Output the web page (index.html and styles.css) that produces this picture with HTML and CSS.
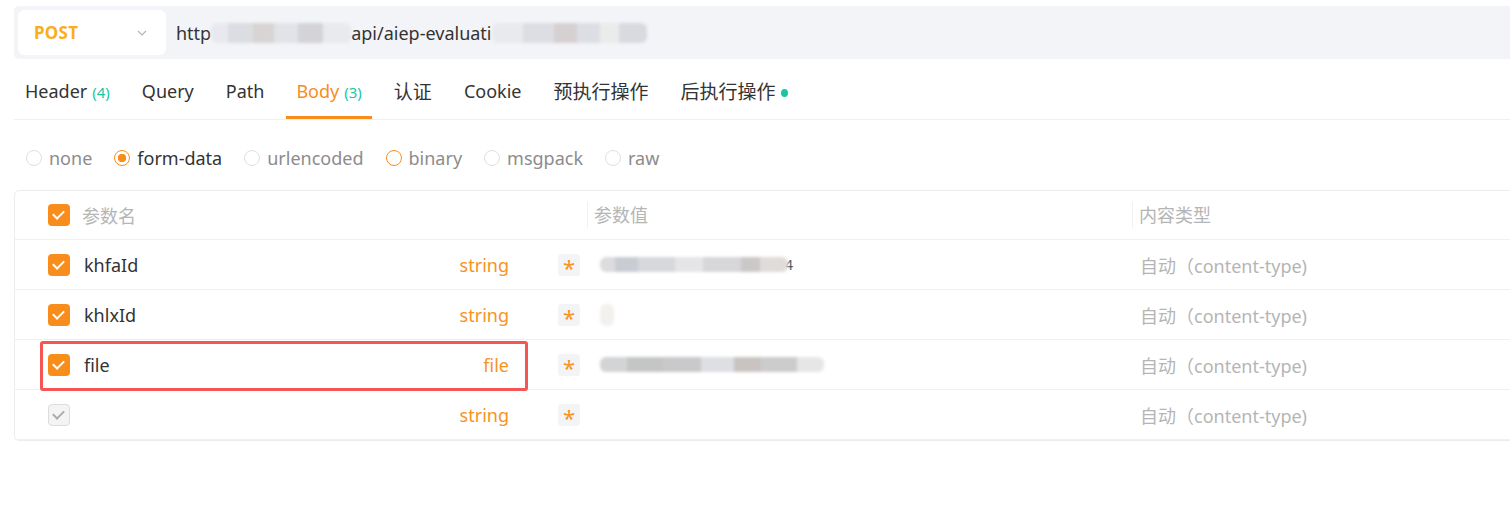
FILE: index.html
```html
<!DOCTYPE html>
<html lang="zh-CN">
<head>
    <meta charset="UTF-8">
    <meta name="viewport" content="width=device-width, initial-scale=1.0">
    <title>Body 参数</title>
    <link rel="stylesheet" href="styles.css">
</head>
<body>
<div class="page">

    <div class="url-bar">
        <div class="method">
            <span class="method-name">POST</span>
            <svg class="chevron" width="10" height="6" viewBox="0 0 10 6"><path d="M1 1l4 4 4-4" fill="none" stroke="#b4b4b4" stroke-width="1.2"/></svg>
        </div>
        <div class="url">http<span class="blur blur-url1"></span>api/aiep-evaluati<span class="blur blur-url2"></span></div>
    </div>

    <div class="tabs">
        <div class="tab">Header<span class="num">(4)</span></div>
        <div class="tab">Query</div>
        <div class="tab">Path</div>
        <div class="tab active">Body<span class="num">(3)</span></div>
        <div class="tab zh">认证</div>
        <div class="tab">Cookie</div>
        <div class="tab zh">预执行操作</div>
        <div class="tab zh">后执行操作<span class="dot"></span></div>
    </div>

    <div class="body-types">
        <label class="radio"><span class="circle"></span>none</label>
        <label class="radio checked"><span class="circle"></span>form-data</label>
        <label class="radio"><span class="circle"></span>urlencoded</label>
        <label class="radio hover"><span class="circle"></span>binary</label>
        <label class="radio"><span class="circle"></span>msgpack</label>
        <label class="radio"><span class="circle"></span>raw</label>
    </div>

    <div class="params">
        <div class="row head">
            <div class="cell name-cell">
                <span class="check on"></span>
                <span class="head-text">参数名</span>
            </div>
            <div class="cell value-cell"><span class="head-text">参数值</span></div>
            <div class="cell type-cell"><span class="head-text">内容类型</span></div>
        </div>
        <div class="row">
            <div class="cell name-cell">
                <span class="check on"></span>
                <span class="param-name">khfaId</span>
                <span class="param-type">string</span>
                <span class="required">*</span>
            </div>
            <div class="cell value-cell"><span class="blur blur-v1"></span><span class="caret">4</span></div>
            <div class="cell type-cell"><span class="auto">自动（content-type)</span></div>
        </div>
        <div class="row">
            <div class="cell name-cell">
                <span class="check on"></span>
                <span class="param-name">khlxId</span>
                <span class="param-type">string</span>
                <span class="required">*</span>
            </div>
            <div class="cell value-cell"><span class="blur blur-v2"></span></div>
            <div class="cell type-cell"><span class="auto">自动（content-type)</span></div>
        </div>
        <div class="row">
            <div class="cell name-cell">
                <span class="check on"></span>
                <span class="param-name">file</span>
                <span class="param-type">file</span>
                <span class="required">*</span>
            </div>
            <div class="cell value-cell"><span class="blur blur-v3"></span></div>
            <div class="cell type-cell"><span class="auto">自动（content-type)</span></div>
        </div>
        <div class="row">
            <div class="cell name-cell">
                <span class="check off"></span>
                <span class="param-name"></span>
                <span class="param-type">string</span>
                <span class="required">*</span>
            </div>
            <div class="cell value-cell"></div>
            <div class="cell type-cell"><span class="auto">自动（content-type)</span></div>
        </div>
        <div class="highlight"></div>
    </div>

</div>
</body>
</html>
```

FILE: styles.css
```css
body {
    margin: 0;
    background: #fff;
    font-family: "Noto Sans", "Noto Sans CJK SC", sans-serif;
    font-size: 18px;
    color: #333;
    overflow: hidden;
}
.page { padding-left: 14px; }

/* url bar */
.url-bar {
    margin-top: 6px;
    height: 53px;
    background: #f3f4f7;
    border-radius: 5px 0 0 5px;
    display: flex;
    align-items: center;
    padding-left: 4px;
}
.method {
    width: 148px;
    height: 45px;
    background: #fff;
    border-radius: 6px;
    display: flex;
    align-items: center;
    box-sizing: border-box;
    padding: 0 19px 0 16px;
    justify-content: space-between;
}
.method-name { color: #fbad1b; font-weight: bold; font-size: 17px; letter-spacing: 0.3px; }
.chevron { margin-top: 1px; }
.url { margin-left: 10px; display: flex; align-items: center; color: #333; }

.blur {
    display: inline-block;
    filter: blur(1.6px);
    border-radius: 6px;
}
.blur-url1 {
    width: 140px; height: 20px;
    background: linear-gradient(90deg, #e8e9ee 0 12%, #dcdde2 12% 30%, #d8d4d3 30% 45%, #e1e3e8 45% 62%, #d3d3d8 62% 80%, #e9eaee 80%);
}
.blur-url2 {
    width: 155px; height: 20px;
    background: linear-gradient(90deg, #e8eaee 0 20%, #dcdee3 20% 40%, #d6d0d2 40% 55%, #dddee3 55% 70%, #ebebec 70% 82%, #d8dadf 82%);
}
.blur-v1 {
    width: 188px; height: 15px;
    background: linear-gradient(90deg, #dcdcde 0 8%, #c9ccd3 8% 20%, #d6d8dc 20% 40%, #e5e5e7 40% 55%, #d7d7da 55% 75%, #cbc9c8 75% 85%, #dfdcda 85%);
}
.blur-v2 {
    width: 14px; height: 22px;
    background: #f3f1ee;
}
.blur-v3 {
    width: 224px; height: 15px;
    background: linear-gradient(90deg, #d3d4d6 0 12%, #c4c6c5 12% 28%, #c9c8ca 28% 45%, #dddfe2 45% 60%, #c9c4c2 60% 72%, #cdcccd 72% 88%, #e6e6e7 88%);
}
.caret { font-size: 14px; color: #555; margin-left: -3px; }

/* tabs */
.tabs {
    margin-top: 2px;
    display: flex;
    gap: 12px;
    border-bottom: 1px solid #efefef;
    padding-left: 1px;
}
.tab {
    height: 58px;
    box-sizing: border-box;
    padding: 0 10px;
    display: flex;
    align-items: center;
    border-bottom: 3px solid transparent;
    padding-top: 5px;
}
.tab.zh { font-size: 19px; }
.tab.active { color: #f88d1c; border-bottom-color: #f88d1c; }
.num { color: #1bc5a2; font-size: 15px; margin-left: 5px; margin-top: 1px; }
.dot {
    width: 7px; height: 8px;
    border-radius: 50%;
    background: #1bc5a2;
    margin-left: 6px;
    margin-top: 3px;
}

/* body types */
.body-types {
    display: flex;
    gap: 22px;
    padding: 27px 0 21px 12px;
    height: 22px;
    align-items: center;
}
.radio { display: flex; align-items: center; gap: 7px; color: #8c8c8c; }
.circle {
    width: 16px; height: 16px;
    box-sizing: border-box;
    border: 1px solid #e0e0e0;
    border-radius: 50%;
}
.radio.checked { color: #333; }
.radio.checked .circle {
    border: 1.5px solid #f88d1c;
    background: radial-gradient(circle, #f88d1c 0 4px, transparent 4.5px);
}
.radio.hover .circle { border: 1.5px solid #f88d1c; }

/* params table */
.params {
    position: relative;
    width: 1540px;
    border: 1px solid #ededed;
    border-radius: 5px 0 0 5px;
}
.row {
    display: flex;
    height: 50px;
    border-bottom: 1px solid #f0f0f0;
    box-sizing: border-box;
}
.row.head { height: 49px; }
.row:last-of-type { border-bottom: none; }
.cell { display: flex; align-items: center; box-sizing: border-box; }
.name-cell { width: 572px; padding: 0 7px 0 33px; }
.value-cell { width: 545px; padding-left: 13px; }
.type-cell { flex: 1; padding-left: 8px; }
.head .value-cell, .head .type-cell { padding-left: 7px; }
.head .value-cell .head-text, .head .type-cell .head-text {
    border-left: 1px solid #f0f0f0;
    padding-left: 6px;
    margin-left: -7px;
    height: 26px;
    line-height: 26px;
}
.head .name-cell .head-text { margin-left: 12px; }
.head-text { color: #b5b5b5; }

.check {
    width: 22px; height: 22px;
    border-radius: 4px;
    box-sizing: border-box;
    flex: none;
    position: relative;
}
.check.on { background: #f88d1c; }
.check.off { background: #f4f4f4; border: 1px solid #dcdcdc; }
.check::after {
    content: "";
    position: absolute;
    left: 7px; top: 4px;
    width: 5px; height: 9px;
    border: solid #fff;
    border-width: 0 2.5px 2.5px 0;
    transform: rotate(45deg);
}
.check.off::after { border-color: #aaa; left: 6px; top: 3px; }

.param-name { margin-left: 14px; flex: 1; }
.param-type { color: #f7931e; }
.required {
    margin-left: 49px;
    width: 22px; height: 22px;
    background: #f3f4f6;
    border-radius: 3px;
    color: #f7931e;
    font-size: 22px;
    line-height: 27px;
    text-align: center;
}
.auto { color: #b5b5b5; }

.highlight {
    position: absolute;
    left: 25px;
    top: 150px;
    width: 488px;
    height: 50px;
    box-sizing: border-box;
    border: 3px solid #f55555;
    border-radius: 3px;
}
```
